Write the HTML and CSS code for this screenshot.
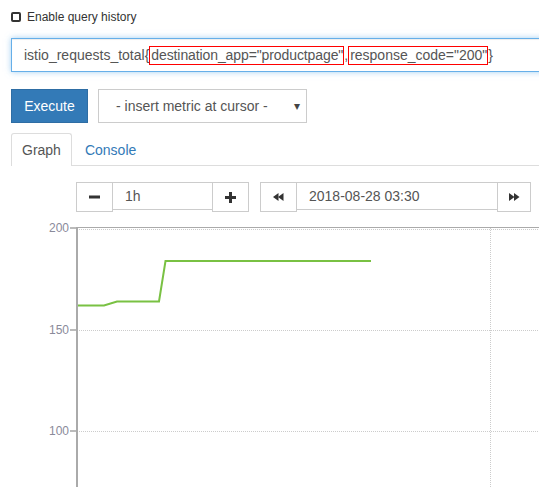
FILE: index.html
```html
<!DOCTYPE html>
<html>
<head>
<meta charset="utf-8">
<link rel="stylesheet" href="styles.css">
</head>
<body>
<div class="top">
  <label class="history"><span class="check"></span><span>Enable query history</span></label>
  <div class="query">istio_requests_total{<span class="hl tight">destination_app="productpage"</span>,<span class="hl">response_code="200"</span>}</div>
  <div class="controls">
    <button class="execute">Execute</button>
    <div class="select"><span>- insert metric at cursor -</span><span class="caret">▾</span></div>
  </div>
  <div class="tabs">
    <div class="tab active">Graph</div>
    <div class="tab">Console</div>
  </div>
  <div class="timebar">
    <div class="group">
      <div class="btn"><svg width="11" height="4" viewBox="0 0 11 4"><rect x="0" y="0.5" width="11" height="3" fill="#333"/></svg></div>
      <div class="field range">1h</div>
      <div class="btn"><svg width="11" height="11" viewBox="0 0 11 11"><rect x="0" y="4" width="11" height="3" fill="#333"/><rect x="4" y="0" width="3" height="11" fill="#333"/></svg></div>
    </div>
    <div class="group">
      <div class="btn"><svg width="11" height="8" viewBox="0 0 11 8"><polygon points="0,4 5.5,0 5.5,8" fill="#333"/><polygon points="5,4 10.5,0 10.5,8" fill="#333"/></svg></div>
      <div class="field date">2018-08-28 03:30</div>
      <div class="btn narrow"><svg width="11" height="8" viewBox="0 0 11 8"><polygon points="0,0 5.5,4 0,8" fill="#333"/><polygon points="5,0 10.5,4 5,8" fill="#333"/></svg></div>
    </div>
  </div>
</div>
<div class="chart">
  <svg width="539" height="267" viewBox="0 220 539 267">
    <line x1="77" y1="229.5" x2="539" y2="229.5" stroke="#ccc" stroke-dasharray="1,1"/>
    <line x1="77" y1="330.5" x2="539" y2="330.5" stroke="#ccc" stroke-dasharray="1,1"/>
    <line x1="77" y1="431.5" x2="539" y2="431.5" stroke="#ccc" stroke-dasharray="1,1"/>
    <line x1="490.5" y1="228" x2="490.5" y2="487" stroke="#ccc" stroke-dasharray="1,1"/>
    <line x1="77" y1="227.5" x2="539" y2="227.5" stroke="#aaa"/>
    <line x1="77" y1="227" x2="77" y2="487" stroke="#aaa" stroke-width="2"/>
    <line x1="70" y1="228" x2="76" y2="228" stroke="#bbb" stroke-width="2"/>
    <line x1="70" y1="330" x2="76" y2="330" stroke="#bbb" stroke-width="2"/>
    <line x1="70" y1="431" x2="76" y2="431" stroke="#bbb" stroke-width="2"/>
    <text class="ylab" x="69" y="232" text-anchor="end">200</text>
    <text class="ylab" x="69" y="334" text-anchor="end">150</text>
    <text class="ylab" x="69" y="435" text-anchor="end">100</text>
    <polyline points="78,305.5 104,305.5 117,301.5 159,301.5 165.5,261 371,261" fill="none" stroke="#79c143" stroke-width="2"/>
  </svg>
</div>
</body>
</html>
```
FILE: styles.css
```css
html, body {
  margin: 0;
  padding: 0;
}
body {
  width: 539px;
  height: 487px;
  overflow: hidden;
  font-family: "Liberation Sans", Arial, sans-serif;
  font-size: 14px;
  color: #333;
  background: #fff;
}
.top {
  padding-left: 11px;
}
.history {
  display: flex;
  align-items: center;
  height: 10px;
  margin-top: 12px;
  font-size: 12px;
  color: #333;
}
.check {
  display: inline-block;
  width: 6px;
  height: 6px;
  border: 2px solid #333;
  border-radius: 2px;
  margin-right: 6px;
}
.query {
  margin-top: 16px;
  width: 560px;
  height: 32px;
  line-height: 32px;
  border: 1px solid #66afe9;
  box-shadow: inset 0 1px 1px rgba(0,0,0,.075), 0 0 6px rgba(102,175,233,.6);
  padding-left: 12px;
  box-sizing: content-box;
  color: #555;
  white-space: nowrap;
}
.hl {
  display: inline-block;
  line-height: 17px;
  border: 1px solid #f00;
  padding: 0 0 0 1px;
  vertical-align: middle;
  position: relative;
  top: -1px;
}
.hl.tight {
  letter-spacing: -0.1px;
}
.controls {
  margin-top: 17px;
  display: flex;
  gap: 10px;
  height: 34px;
}
.execute {
  width: 77px;
  height: 34px;
  background: #337ab7;
  border: 1px solid #2e6da4;
  color: #fff;
  font-family: inherit;
  font-size: 14px;
  padding: 0;
}
.select {
  width: 209px;
  height: 34px;
  box-sizing: border-box;
  border: 1px solid #ccc;
  display: flex;
  align-items: center;
  padding-left: 17px;
  padding-right: 6px;
  color: #555;
  position: relative;
}
.caret {
  margin-left: auto;
  font-size: 12px;
  color: #444;
}
.tabs {
  margin-top: 10px;
  display: flex;
  border-bottom: 1px solid #ddd;
  height: 32px;
}
.tab {
  padding: 0 10px;
  line-height: 32px;
  height: 32px;
  color: #337ab7;
  margin-right: 2px;
  border: 1px solid transparent;
  border-bottom: none;
  box-sizing: border-box;
}
.tab.active {
  color: #555;
  border-color: #ddd;
  background: #fff;
  height: 33px;
  border-radius: 3px 3px 0 0;
}
.timebar {
  margin-top: 16px;
  margin-left: 65px;
  display: flex;
  gap: 11px;
}
.group {
  display: flex;
  align-items: flex-start;
}
.btn {
  width: 37px;
  height: 30px;
  box-sizing: border-box;
  border: 1px solid #ccc;
  background: #fff;
  display: flex;
  align-items: center;
  justify-content: center;
}
.btn.narrow {
  width: 34px;
}
.field {
  height: 28px;
  box-sizing: border-box;
  border-top: 1px solid #ccc;
  border-bottom: 1px solid #ccc;
  padding-left: 12px;
  line-height: 26px;
  color: #555;
}
.range {
  width: 99px;
}
.date {
  width: 200px;
}
.chart {
  margin-top: 8px;
  height: 267px;
}
.chart svg {
  display: block;
}
.ylab {
  font-family: "Liberation Sans", Arial, sans-serif;
  font-size: 12px;
  fill: #8a8a9a;
}
```
